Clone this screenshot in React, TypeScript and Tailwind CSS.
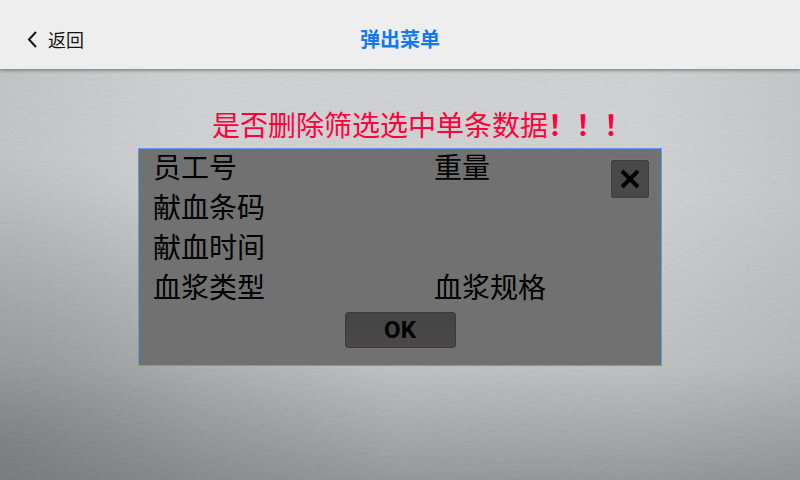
import React from "react";

const fields = [
  ["员工号", "重量"],
  ["献血条码", ""],
  ["献血时间", ""],
  ["血浆类型", "血浆规格"],
];

function PaperTexture() {
  return (
    <svg className="pointer-events-none absolute inset-0 size-full opacity-5" aria-hidden="true">
      <filter id="paper" x="0" y="0" width="100%" height="100%" colorInterpolationFilters="sRGB">
        <feTurbulence type="fractalNoise" baseFrequency="0.14 0.35" numOctaves="2" seed="4" result="noise" />
        <feDiffuseLighting in="noise" surfaceScale="0.6" diffuseConstant="1.1" lightingColor="#ffffff">
          <feDistantLight azimuth="250" elevation="45" />
        </feDiffuseLighting>
      </filter>
      <rect width="100%" height="100%" filter="url(#paper)" />
    </svg>
  );
}

export default function App() {
  return (
    <div className="relative isolate flex min-h-screen flex-col bg-[radial-gradient(ellipse_50%_60%_at_0%_92%,rgba(70,72,74,0.36),rgba(70,72,74,0.2)_45%,transparent),linear-gradient(to_right,rgba(90,95,98,0.12),transparent_25%,transparent_80%,rgba(90,95,98,0.1)),linear-gradient(to_bottom,#cfd1d2_70px,#cfd1d2_40%,#bec0c1_76%,#949596_100%)] font-['Noto_Sans_CJK_SC',sans-serif] text-black">
      <header className="z-10 grid h-[70px] grid-cols-[1fr_auto_1fr] items-center border-b border-[#8f9394] bg-[#eeeeee] px-6 pt-2 shadow-[0_1px_3px_rgba(0,0,0,0.3)]">
        <button type="button" className="flex items-center gap-2 justify-self-start text-lg font-normal text-[#181310]">
          <svg viewBox="0 0 16 20" className="h-5 w-4" fill="none" stroke="currentColor" strokeWidth="2" aria-hidden="true">
            <path d="M12 3 5 10.500l7 7.500" />
          </svg>
          返回
        </button>
        <h1 className="text-xl font-bold text-[#1478f0]">弹出菜单</h1>
      </header>

      <PaperTexture />

      <main className="z-10 flex flex-col items-center pt-9">
        <p className="pb-1.5 pl-11 text-[28px] leading-9 text-[#ff003c]">
          是否删除筛选选中单条数据<span className="font-bold">！！！</span>
        </p>
        <section role="dialog" aria-label="弹出菜单" className="flex w-[524px] flex-col border border-[#619be8] bg-[#717171] pb-[17px]">
          <div className="flex items-start justify-between pr-3 pl-3.5">
            <ul className="text-[28px] leading-[34px]">
              {fields.map(([left, right]) => (
                <li key={left} className="grid grid-cols-[281px_auto] pb-1.5">
                  <span>{left}</span>
                  <span>{right}</span>
                </li>
              ))}
            </ul>
            <button type="button" aria-label="关闭" className="mt-[11px] flex size-[38px] items-center justify-center rounded-xs border border-[#3e3e3e] bg-[#484848] shadow-[0_0_1px_#999]">
              <svg viewBox="0 0 20 20" className="size-5" fill="none" stroke="currentColor" strokeWidth="4" aria-hidden="true">
                <path d="M2 2l16 16M18 2 2 18" />
              </svg>
            </button>
          </div>
          <button type="button" className="mt-[3px] h-9 w-[111px] self-center rounded-[3px] border border-[#3b3b3b] bg-linear-to-b from-[#444] to-[#4a4848] font-[Roboto,sans-serif] text-2xl leading-8 font-bold shadow-[0_0_1px_#888]">
            OK
          </button>
        </section>
      </main>
    </div>
  );
}
